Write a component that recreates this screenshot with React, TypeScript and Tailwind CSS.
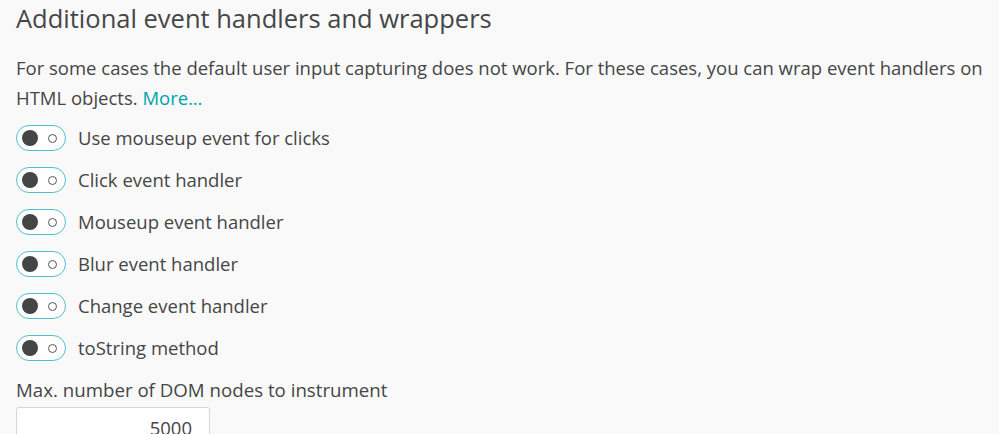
import React from 'react';

const options = [
  'Use mouseup event for clicks',
  'Click event handler',
  'Mouseup event handler',
  'Blur event handler',
  'Change event handler',
  'toString method',
];

const Toggle: React.FC = () => (
  <span className="flex h-[26px] w-[50px] shrink-0 items-center justify-between rounded-full border-[1.5px] border-[#4ec0cc] bg-white pl-[5px] pr-[8px]">
    <span className="h-[16px] w-[16px] rounded-full bg-[#444545]" />
    <span className="h-[9px] w-[9px] rounded-full border-[1.5px] border-[#555]" />
  </span>
);

export default function App() {
  return (
    <div
      className="h-[434px] w-[999px] overflow-hidden bg-[#f9f9f9] px-[16px] text-[#454646]"
      style={{ fontFamily: '"Open Sans", sans-serif' }}
    >
      <h2 className="pt-[3px] text-[25.5px] leading-[30px]">Additional event handlers and wrappers</h2>
      <p className="mt-[20px] text-[18.5px] leading-[30px]">
        For some cases the default user input capturing does not work. For these cases, you can wrap event handlers on
        HTML objects. <a className="text-[#00a1b2]">More…</a>
      </p>
      <div className="mt-[12px] flex flex-col gap-[16px]">
        {options.map((label) => (
          <label key={label} className="flex items-center gap-[12px] text-[18.5px] leading-[26px]">
            <Toggle />
            <span>{label}</span>
          </label>
        ))}
      </div>
      <div className="mt-[16px] text-[18.7px] leading-[26px]">Max. number of DOM nodes to instrument</div>
      <div className="mt-[4px] flex h-[42px] w-[194px] items-center justify-end rounded-[3px] border border-[#d6d6d6] bg-white pr-[17px] text-[18.5px]">
        5000
      </div>
    </div>
  );
}
